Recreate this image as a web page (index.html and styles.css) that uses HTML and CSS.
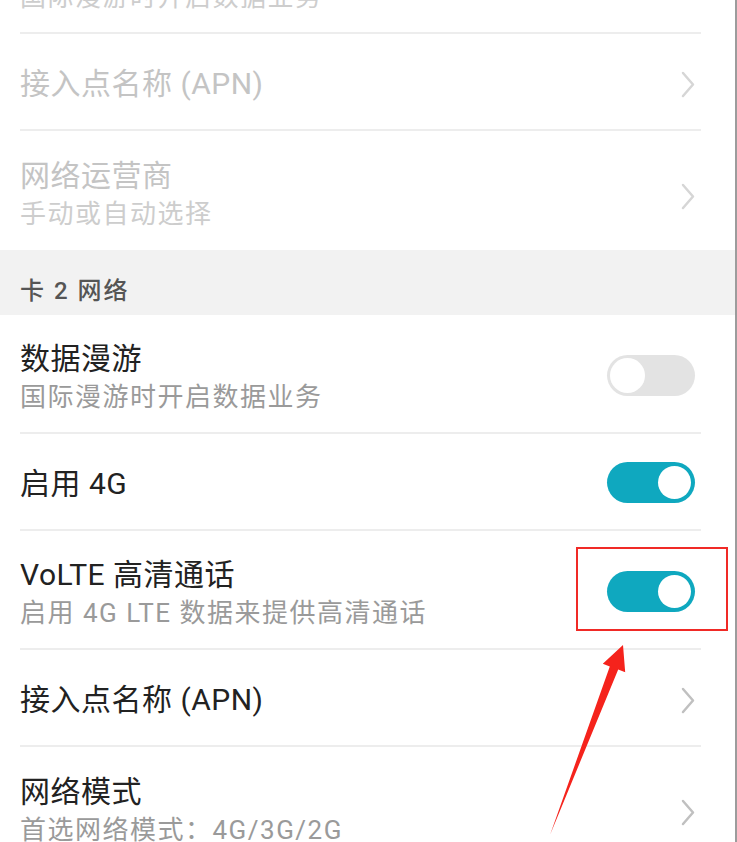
FILE: index.html
```html
<!DOCTYPE html>
<html lang="zh-CN">
<head>
    <meta charset="UTF-8">
    <title>移动网络</title>
    <link rel="stylesheet" href="styles.css">
</head>
<body>

<div class="screen">
    <div class="list">
        <!--卡 1 网络（已置灰）-->
        <div class="item two disabled">
            <div class="item_text">
                <p class="title">数据漫游</p>
                <p class="sub">国际漫游时开启数据业务</p>
            </div>
            <span class="switch"></span>
        </div>

        <div class="item disabled">
            <div class="item_text">
                <p class="title">接入点名称 (APN)</p>
            </div>
            <svg class="arrow" width="14" height="27" viewBox="0 0 14 27">
                <polyline points="2,2 12,13.5 2,25"/>
            </svg>
        </div>

        <div class="item two disabled last">
            <div class="item_text">
                <p class="title">网络运营商</p>
                <p class="sub">手动或自动选择</p>
            </div>
            <svg class="arrow" width="14" height="27" viewBox="0 0 14 27">
                <polyline points="2,2 12,13.5 2,25"/>
            </svg>
        </div>

        <div class="group_title">卡 2 网络</div>

        <div class="item two">
            <div class="item_text">
                <p class="title">数据漫游</p>
                <p class="sub">国际漫游时开启数据业务</p>
            </div>
            <span class="switch"></span>
        </div>

        <div class="item">
            <div class="item_text">
                <p class="title">启用 4G</p>
            </div>
            <span class="switch on"></span>
        </div>

        <div class="item two">
            <div class="item_text">
                <p class="title">VoLTE 高清通话</p>
                <p class="sub">启用 4G LTE 数据来提供高清通话</p>
            </div>
            <span class="switch on"></span>
        </div>

        <div class="item">
            <div class="item_text">
                <p class="title">接入点名称 (APN)</p>
            </div>
            <svg class="arrow" width="14" height="27" viewBox="0 0 14 27">
                <polyline points="2,2 12,13.5 2,25"/>
            </svg>
        </div>

        <div class="item two last">
            <div class="item_text">
                <p class="title">网络模式</p>
                <p class="sub">首选网络模式：4G/3G/2G</p>
            </div>
            <svg class="arrow" width="14" height="27" viewBox="0 0 14 27">
                <polyline points="2,2 12,13.5 2,25"/>
            </svg>
        </div>
    </div>

    <!--标注：红框和箭头-->
    <div class="mark_box"></div>
    <svg class="mark_arrow" width="737" height="842" viewBox="0 0 737 842">
        <polygon points="550,835 609.8,666.4 602.8,663.7 623,645 625.2,672.3 618.2,669.6"/>
    </svg>
</div>

</body>
</html>
```

FILE: styles.css
```css
* {
    margin: 0px;
    padding: 0px;
    box-sizing: border-box;
}

body {
    background-color: white;
    font-family: Roboto, "Noto Sans CJK SC", sans-serif;
    overflow: hidden;
}

.screen {
    position: relative;
    width: 737px;
    height: 842px;
    overflow: hidden;
    border-right: 2px solid #9c9c9c;
}

.list {
    /*第一行只露出一部分*/
    margin-top: -85px;
}

.item {
    display: flex;
    align-items: center;
    justify-content: space-between;
    height: 97px;
    padding-top: 5px;
    margin: 0 34px 0 20px;
    border-bottom: 2px solid #ededed;
}

.item.two {
    height: 119px;
    padding-top: 8px;
}

.item.last {
    border-bottom: none;
}

.title {
    font-size: 30px;
    line-height: 38px;
    letter-spacing: 0.5px;
    color: #222222;
}

.sub {
    font-size: 26px;
    line-height: 38px;
    letter-spacing: 1.5px;
    color: #9a9a9a;
}

.item.disabled .title {
    color: #c4c4c4;
}

.item.disabled .sub {
    color: #cdcdcd;
}

.arrow {
    margin-right: 6px;
    fill: none;
    stroke: #c0c0c0;
    stroke-width: 2.5;
    stroke-linecap: round;
    stroke-linejoin: round;
}

.item.two .arrow {
    margin-top: 4px;
}

.item.disabled .arrow {
    stroke: #d6d6d6;
}

.group_title {
    height: 65px;
    padding: 27px 0 0 20px;
    background-color: #f2f2f2;
    font-size: 24px;
    font-weight: 500;
    line-height: 28px;
    letter-spacing: 2px;
    color: #555555;
}

/*开关*/
.switch {
    position: relative;
    width: 88px;
    height: 41px;
    margin-right: 6px;
    margin-top: -4px;
    border-radius: 21px;
    background-color: #e3e3e3;
}

.switch::after {
    content: "";
    position: absolute;
    left: 3px;
    top: 3px;
    width: 35px;
    height: 35px;
    border-radius: 50%;
    background-color: white;
}

.switch.on {
    background-color: #0fa8bf;
}

.switch.on::after {
    left: auto;
    right: 4px;
    top: 4px;
    width: 33px;
    height: 33px;
}

.item.disabled .switch {
    background-color: #f2f2f2;
}

.mark_box {
    position: absolute;
    left: 576px;
    top: 547px;
    width: 152px;
    height: 84px;
    border: 2px solid #f02a26;
}

.mark_arrow {
    position: absolute;
    left: 0;
    top: 0;
    fill: #f5231c;
}
```
